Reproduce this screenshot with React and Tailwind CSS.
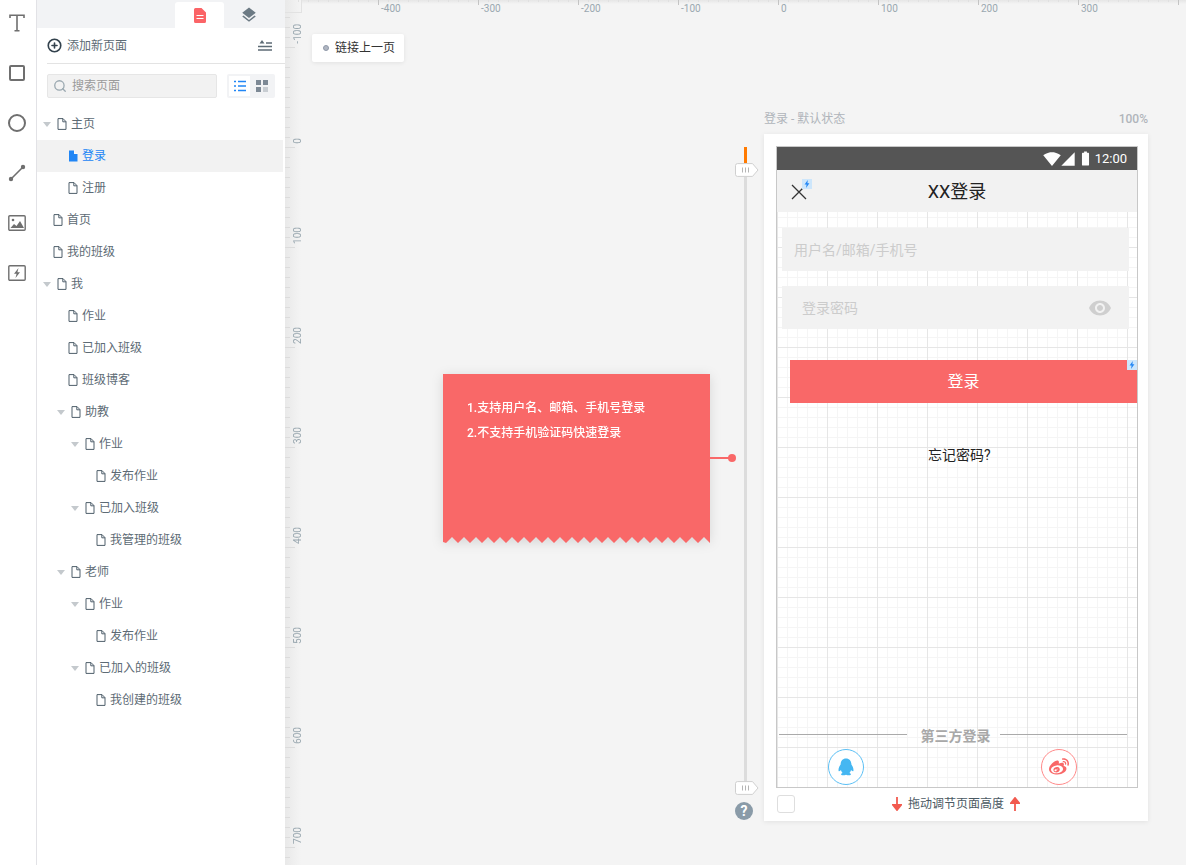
import { CirclePlus, Search } from "lucide-react";
import { FaWeibo } from "react-icons/fa";
import {
  MdBatteryFull,
  MdLayers,
  MdSignalCellular4Bar,
  MdSignalWifi4Bar,
  MdVisibility,
} from "react-icons/md";

const font = "font-['Roboto','Noto_Sans_CJK_SC',sans-serif]";

const pages = [
  { label: "主页", pad: "pl-[6px]", arrow: true },
  { label: "登录", pad: "pl-[31px]", active: true },
  { label: "注册", pad: "pl-[31px]" },
  { label: "首页", pad: "pl-[16px]" },
  { label: "我的班级", pad: "pl-[16px]" },
  { label: "我", pad: "pl-[6px]", arrow: true },
  { label: "作业", pad: "pl-[31px]" },
  { label: "已加入班级", pad: "pl-[31px]" },
  { label: "班级博客", pad: "pl-[31px]" },
  { label: "助教", pad: "pl-[20px]", arrow: true },
  { label: "作业", pad: "pl-[34px]", arrow: true },
  { label: "发布作业", pad: "pl-[59px]" },
  { label: "已加入班级", pad: "pl-[34px]", arrow: true },
  { label: "我管理的班级", pad: "pl-[59px]" },
  { label: "老师", pad: "pl-[20px]", arrow: true },
  { label: "作业", pad: "pl-[34px]", arrow: true },
  { label: "发布作业", pad: "pl-[59px]" },
  { label: "已加入的班级", pad: "pl-[34px]", arrow: true },
  { label: "我创建的班级", pad: "pl-[59px]" },
];

function PageIcon({ active }) {
  if (active) {
    return (
      <svg width="10" height="12" viewBox="0 0 10 12" className="shrink-0">
        <path d="M1 0.5h5l3.5 3.5v7.5h-8.5z M6 0.5v3.5h3.5" fill="#2186f5" />
        <path d="M6.6 0.5v2.9h2.9" fill="none" stroke="#fff" strokeWidth="0.7" />
      </svg>
    );
  }
  return (
    <svg width="10" height="12" viewBox="0 0 10 12" className="shrink-0">
      <path d="M1 .6h5l3 3v7.8h-8z M5.8 .6v3.2h3.2" fill="none" stroke="#4f5f6b" strokeWidth="1" />
    </svg>
  );
}

function Tree() {
  return (
    <div className="mt-[10px] flex flex-col">
      {pages.map((p, i) => (
        <div
          key={i}
          className={`flex h-[32px] items-center mr-[2px] ${p.pad} ${p.active ? "bg-[#f2f2f2]" : ""}`}
        >
          {p.arrow && (
            <span className="mr-[6px] h-0 w-0 border-x-[4px] border-t-[5px] border-x-transparent border-t-[#c4c9cd]" />
          )}
          <PageIcon active={p.active} />
          <span className={`ml-[4px] text-xs ${p.active ? "text-[#2186f5]" : "text-[#5d6b75]"}`}>{p.label}</span>
        </div>
      ))}
    </div>
  );
}

function Rail() {
  const c = "#6f6f6f";
  const item = "flex h-[50px] w-[34px] items-center justify-center";
  return (
    <div className="flex w-[37px] shrink-0 flex-col border-r border-[#e2e2e6] bg-white">
      <div className={`-mt-[2px] ${item}`}>
        <svg width="16" height="18" viewBox="0 0 16 18">
          <path d="M1 4V1.2h14V4 M8 1.2v15.6 M5.5 16.8h5" fill="none" stroke={c} strokeWidth="1.6" />
        </svg>
      </div>
      <div className={item}>
        <span className="h-[16px] w-[16px] rounded-[2px] border-2 border-[#6f6f6f]" />
      </div>
      <div className={item}>
        <span className="h-[18px] w-[18px] rounded-full border-2 border-[#6f6f6f]" />
      </div>
      <div className={item}>
        <svg width="18" height="18" viewBox="0 0 18 18">
          <path d="M3 15L15 3" stroke={c} strokeWidth="1.6" />
          <circle cx="3" cy="15" r="2.2" fill={c} />
          <circle cx="15" cy="3" r="2.2" fill={c} />
        </svg>
      </div>
      <div className={item}>
        <svg width="18" height="16" viewBox="0 0 18 16">
          <rect x=".8" y=".8" width="16.4" height="14.4" rx="1" fill="none" stroke={c} strokeWidth="1.4" />
          <circle cx="5" cy="5" r="1.3" fill={c} />
          <path d="M2.5 13l3.5-4 2.5 2 3.5-5 4 7z" fill={c} />
        </svg>
      </div>
      <div className={item}>
        <svg width="18" height="16" viewBox="0 0 18 16">
          <rect x=".8" y=".8" width="16.4" height="14.4" rx="1" fill="none" stroke={c} strokeWidth="1.4" />
          <path d="M10.5 3L6 8.7h2.6L7.5 13 12 7.3H9.4z" fill={c} />
        </svg>
      </div>
    </div>
  );
}

function Sidebar() {
  return (
    <div className="flex w-[248px] shrink-0 flex-col bg-white">
      <div className="flex h-[28px] bg-[#f2f3f5] pl-[138px] pt-[2px]">
        <div className="flex h-[26px] w-[49px] items-center justify-center rounded-t-[3px] bg-white">
          <svg width="12" height="15" viewBox="0 0 12 15">
            <path d="M1.5 0h6L12 4.5V13.5a1.5 1.5 0 0 1-1.5 1.5h-9A1.5 1.5 0 0 1 0 13.5V1.500A1.500 1.500 0 0 1 1.500 0z" fill="#fb6467" />
            <path d="M2.500 7.500h7 M2.500 10.500h7" stroke="#fff" strokeWidth="1.200" />
          </svg>
        </div>
        <div className="flex h-[26px] w-[49px] items-center justify-center text-[#6c7a84]">
          <MdLayers size={18} />
        </div>
      </div>
      <div className="ml-[10px] flex h-[36px] items-center border-b border-[#e3e3e3] pr-[13px]">
        <CirclePlus size={15} strokeWidth={2.6} className="text-[#33424d]" />
        <span className="ml-[5px] flex-1 text-xs text-[#5d6b75]">添加新页面</span>
        <svg width="14" height="11" viewBox="0 0 14 11">
          <path d="M4 0l2.500 3.500h-5z" fill="#5d6b75" />
          <path d="M8 3h6 M0 6.500h14 M0 10h14" stroke="#5d6b75" strokeWidth="1.500" />
        </svg>
      </div>
      <div className="ml-[10px] mt-[10px] flex items-center">
        <div className="flex h-[24px] w-[170px] items-center rounded-[2px] border border-[#e6e6e6] bg-[#f2f2f2] pl-[5px]">
          <Search size={14} strokeWidth={2.2} className="text-[#9aa8b0]" />
          <span className="ml-[5px] text-xs text-[#9a9a9a]">搜索页面</span>
        </div>
        <div className="ml-[10px] flex h-[24px] w-[48px] items-center rounded-[2px] bg-[#f2f3f5] pl-[2px]">
          <div className="flex h-[20px] w-[21px] items-center justify-center bg-white">
            <svg width="12" height="12" viewBox="0 0 12 12">
              <path d="M0 1.500h2 M4 1.500h8 M0 6h2 M4 6h8 M0 10.500h2 M4 10.500h8" stroke="#2186f5" strokeWidth="1.600" />
            </svg>
          </div>
          <div className="ml-[6px]">
            <svg width="12" height="12" viewBox="0 0 12 12">
              <rect x="0" y="0" width="5" height="5" fill="#7d8995" />
              <rect x="7" y="0" width="5" height="5" fill="#7d8995" />
              <rect x="0" y="7" width="5" height="5" fill="#7d8995" />
              <rect x="7" y="7" width="5" height="5" fill="#c8cdd2" />
            </svg>
          </div>
        </div>
      </div>
      <Tree />
    </div>
  );
}

const topLabels = [-400, -300, -200, -100, 0, 100, 200, 300];
const sideLabels = [-100, 0, 100, 200, 300, 400, 500, 600, 700];

function Rulers() {
  const topTicks = [];
  for (let x = 13; x < 901; x += 10) topTicks.push(x);
  const sideTicks = [];
  for (let y = 17; y < 865; y += 10) sideTicks.push(y);
  return (
    <>
      <div className="absolute left-0 top-0 h-full w-[16px] bg-gradient-to-r from-[#e9e9e9] to-[#f4f4f4]" />
      <div className="absolute left-[16px] top-0 h-[4px] w-[885px] bg-gradient-to-b from-[#e6e6e6] to-[#f4f4f4]" />
      <div className="absolute left-0 top-0 h-[13px] w-[17px] border-b border-r border-[#e2e2e2]" />
      <svg className="absolute left-0 top-0" width="901" height="865">
        {topTicks.map((x) => {
          const major = (x - 93) % 100 === 0;
          return <line key={x} x1={x + 0.5} x2={x + 0.5} y1="0" y2={major ? 5 : 2} stroke={major ? "#c4c4c4" : "#e0e0e0"} />;
        })}
        {sideTicks.map((y) => (
          <line key={y} x1="0" x2={(y - 47) % 100 === 0 ? 10 : 5} y1={y + 0.5} y2={y + 0.5} stroke="#dcdcdc" />
        ))}
      </svg>
      {topLabels.map((n) => (
        <span
          key={n}
          className="absolute top-[3px] text-[10px] leading-[12px] text-[#9aa8b0]"
          style={{ left: 493 + n + 3 }}
        >
          {n}
        </span>
      ))}
      {sideLabels.map((n) => (
        <span
          key={n}
          className="absolute left-[8px] rotate-180 text-[10px] leading-[10px] text-[#9aa8b0] [writing-mode:vertical-rl]"
          style={{ bottom: 865 - (147 + n) + 3 }}
        >
          {n}
        </span>
      ))}
    </>
  );
}

function Bolt({ className }) {
  return (
    <div className={`absolute flex h-[10px] w-[10px] items-center justify-center bg-[#cde6fb] ${className}`}>
      <svg width="6" height="8" viewBox="0 0 6 8">
        <path d="M3.800 0L.6 4.500h2L2 8l3.400-4.700h-2z" fill="#2186f5" />
      </svg>
    </div>
  );
}

function Phone() {
  return (
    <div className="ml-[12px] mt-[12px] flex h-[642px] w-[362px] flex-col border border-[#c8c8c8] bg-white">
      <div className="flex h-[23px] shrink-0 items-center justify-end bg-[#555555] pr-[10px] text-white">
        <MdSignalWifi4Bar size={18} />
        <MdSignalCellular4Bar size={16} className="-ml-[1px]" />
        <MdBatteryFull size={17} className="ml-[1px]" />
        <span className="ml-[1px] text-[13px]">12:00</span>
      </div>
      <div className="relative flex h-[42px] shrink-0 items-center justify-center bg-[#f2f2f2] text-[18px] text-[#222]">
        XX登录
        <svg className="absolute left-[14px] top-[14px]" width="16" height="16" viewBox="0 0 16 16">
          <path d="M1 1l14 14 M15 1L1 15" stroke="#333" strokeWidth="1.300" />
        </svg>
        <Bolt className="left-[25px] top-[9px]" />
      </div>
      <div className="relative flex flex-1 flex-col bg-white bg-[linear-gradient(to_right,#e6e6e6_1px,transparent_1px),linear-gradient(to_bottom,#e6e6e6_1px,transparent_1px),linear-gradient(to_right,#f5f5f5_1px,transparent_1px),linear-gradient(to_bottom,#f5f5f5_1px,transparent_1px)] bg-[size:50px_50px,50px_50px,10px_10px,10px_10px] bg-[position:0_-15px,0_-15px,0_-5px,0_-5px]">
        <div className="ml-[5px] mt-[16px] flex h-[43px] w-[347px] items-center bg-[#f2f2f2] pl-[12px] text-sm text-[#cccccc]">
          用户名/邮箱/手机号
        </div>
        <div className="ml-[5px] mt-[15px] flex h-[43px] w-[347px] items-center justify-between bg-[#f2f2f2] pl-[20px] pr-[17px] text-sm text-[#cccccc]">
          登录密码
          <MdVisibility size={24} className="text-[#cfcfcf]" />
        </div>
        <div className="relative ml-[13px] mt-[31px] flex h-[43px] w-[347px] items-center justify-center bg-[#f96868] text-base text-white">
          登录
          <Bolt className="right-0 top-0" />
        </div>
        <div className="mt-[42px] pl-[151px] text-sm leading-[20px] text-[#222]">忘记密码?</div>
        <div className="mt-auto flex h-[20px] items-center pl-[2px] pr-[10px]">
          <span className="h-px flex-1 bg-[#aaaaaa]" />
          <span className="ml-[14px] mr-[9px] translate-y-[2px] text-sm font-bold text-[#a8a8a8]">第三方登录</span>
          <span className="h-px flex-1 bg-[#aaaaaa]" />
        </div>
        <div className="mb-[2px] mt-[5px] flex h-[36px] items-center justify-between pl-[51px] pr-[60px]">
          <div className="flex h-[36px] w-[36px] items-center justify-center rounded-full border border-[#5cc0f5] bg-white">
            <svg width="20" height="20" viewBox="0 0 20 20">
              <path
                d="M10 1.500C6.400 1.500 4.600 4.300 4.600 7.600C3.300 9.400 2.200 11.600 2.600 14C3.400 14.500 4.300 13.800 4.900 13C5.300 14.200 5.900 15.200 6.600 15.900C5.500 16.300 4.800 17 5.200 17.800C6 18.600 8.400 18.500 10 17.800C11.600 18.500 14 18.600 14.800 17.800C15.200 17 14.500 16.300 13.400 15.900C14.100 15.200 14.700 14.200 15.100 13C15.700 13.800 16.600 14.500 17.400 14C17.800 11.600 16.700 9.400 15.400 7.600C15.400 4.300 13.600 1.500 10 1.500Z"
                fill="#45b7f2"
              />
            </svg>
          </div>
          <div className="flex h-[36px] w-[36px] items-center justify-center rounded-full border border-[#ff8a8a] bg-white">
            <FaWeibo size={20} className="text-[#f96868]" />
          </div>
        </div>
      </div>
    </div>
  );
}

function Handle({ className }) {
  return (
    <div className={`absolute left-[450px] ${className}`}>
      <svg width="24" height="14" viewBox="0 0 24 14">
        <path d="M2.500 .6h15l5.500 6.400-5.500 6.400h-15a2 2 0 0 1-2-2v-8.800a2 2 0 0 1 2-2z" fill="#fff" stroke="#cfcfcf" />
        <path d="M7.500 4.500v5 M10.500 4.500v5 M13.500 4.500v5" stroke="#b5b5b5" />
      </svg>
    </div>
  );
}

function Note() {
  const teeth = [];
  for (let i = 0; i < 22; i++) teeth.push(i);
  return (
    <div className="absolute left-[158px] top-[374px] w-[267px] drop-shadow-[0_2px_6px_rgba(0,0,0,0.12)]">
      <div className="h-[163px] bg-[#f96868] pl-[24px] pt-[22px] text-xs font-medium leading-[25px] text-white">
        <div>1.支持用户名、邮箱、手机号登录</div>
        <div>2.不支持手机验证码快速登录</div>
      </div>
      <svg className="block" width="267" height="6" viewBox="0 0 267 6">
        <path d={`M0 0H267V6 ${teeth.map((i) => `L${267 - 6 - i * 12} 0L${267 - 12 - i * 12} 6`).join(" ")} L0 5Z`} fill="#f96868" />
      </svg>
    </div>
  );
}

export default function App() {
  return (
    <div className={`flex h-[865px] w-[1186px] overflow-hidden bg-[#f4f4f4] ${font}`}>
      <Rail />
      <Sidebar />
      <div className="relative flex-1">
        <Rulers />

        <div className="absolute left-[27px] top-[34px] flex h-[28px] w-[92px] items-center rounded-[2px] bg-white pl-[11px] text-xs text-[#333] shadow-[0_1px_4px_rgba(0,0,0,0.08)]">
          <span className="h-[6px] w-[6px] rounded-full border border-[#8f98a8] bg-[#b0b6c2]" />
          <span className="ml-[6px]">链接上一页</span>
        </div>

        <Note />
        <div className="absolute left-[425px] top-[457px] h-[2px] w-[20px] bg-[#f96868]" />
        <div className="absolute left-[443px] top-[454px] h-[8px] w-[8px] rounded-full bg-[#f96868]" />

        <div className="absolute left-[459px] top-[147px] h-[643px] w-[3px] bg-[#dcdcdc]" />
        <div className="absolute left-[459px] top-[147px] h-[16px] w-[3px] bg-[#ff7a00]" />
        <Handle className="top-[163px]" />
        <Handle className="top-[781px]" />
        <div className="absolute left-[450px] top-[802px] flex h-[18px] w-[18px] items-center justify-center rounded-full bg-[#8a9ba8] text-sm font-bold text-white">
          ?
        </div>

        <div className="absolute left-[479px] top-[112px] flex w-[384px] justify-between text-xs leading-[14px] text-[#b0b5bb]">
          <span>登录 - 默认状态</span>
          <span className="font-medium">100%</span>
        </div>

        <div className="absolute left-[479px] top-[134px] h-[687px] w-[384px] bg-white shadow-[0_1px_5px_rgba(0,0,0,0.08)]">
          <Phone />
          <div className="relative mx-[13px] mt-[7px] flex h-[18px] items-center justify-center text-xs text-[#4b5963]">
            <span className="absolute left-0 top-0 h-[18px] w-[18px] rounded-[3px] border border-[#dedede]" />
            <svg width="10" height="14" viewBox="0 0 10 14">
              <path d="M5 0v12 M1 8l4 5 4-5z" fill="#f25a4f" stroke="#f25a4f" strokeWidth="1.800" />
            </svg>
            <span className="mx-[6px]">拖动调节页面高度</span>
            <svg width="10" height="14" viewBox="0 0 10 14">
              <path d="M5 14V2 M1 6l4-5 4 5z" fill="#f25a4f" stroke="#f25a4f" strokeWidth="1.800" />
            </svg>
          </div>
        </div>
      </div>
    </div>
  );
}
